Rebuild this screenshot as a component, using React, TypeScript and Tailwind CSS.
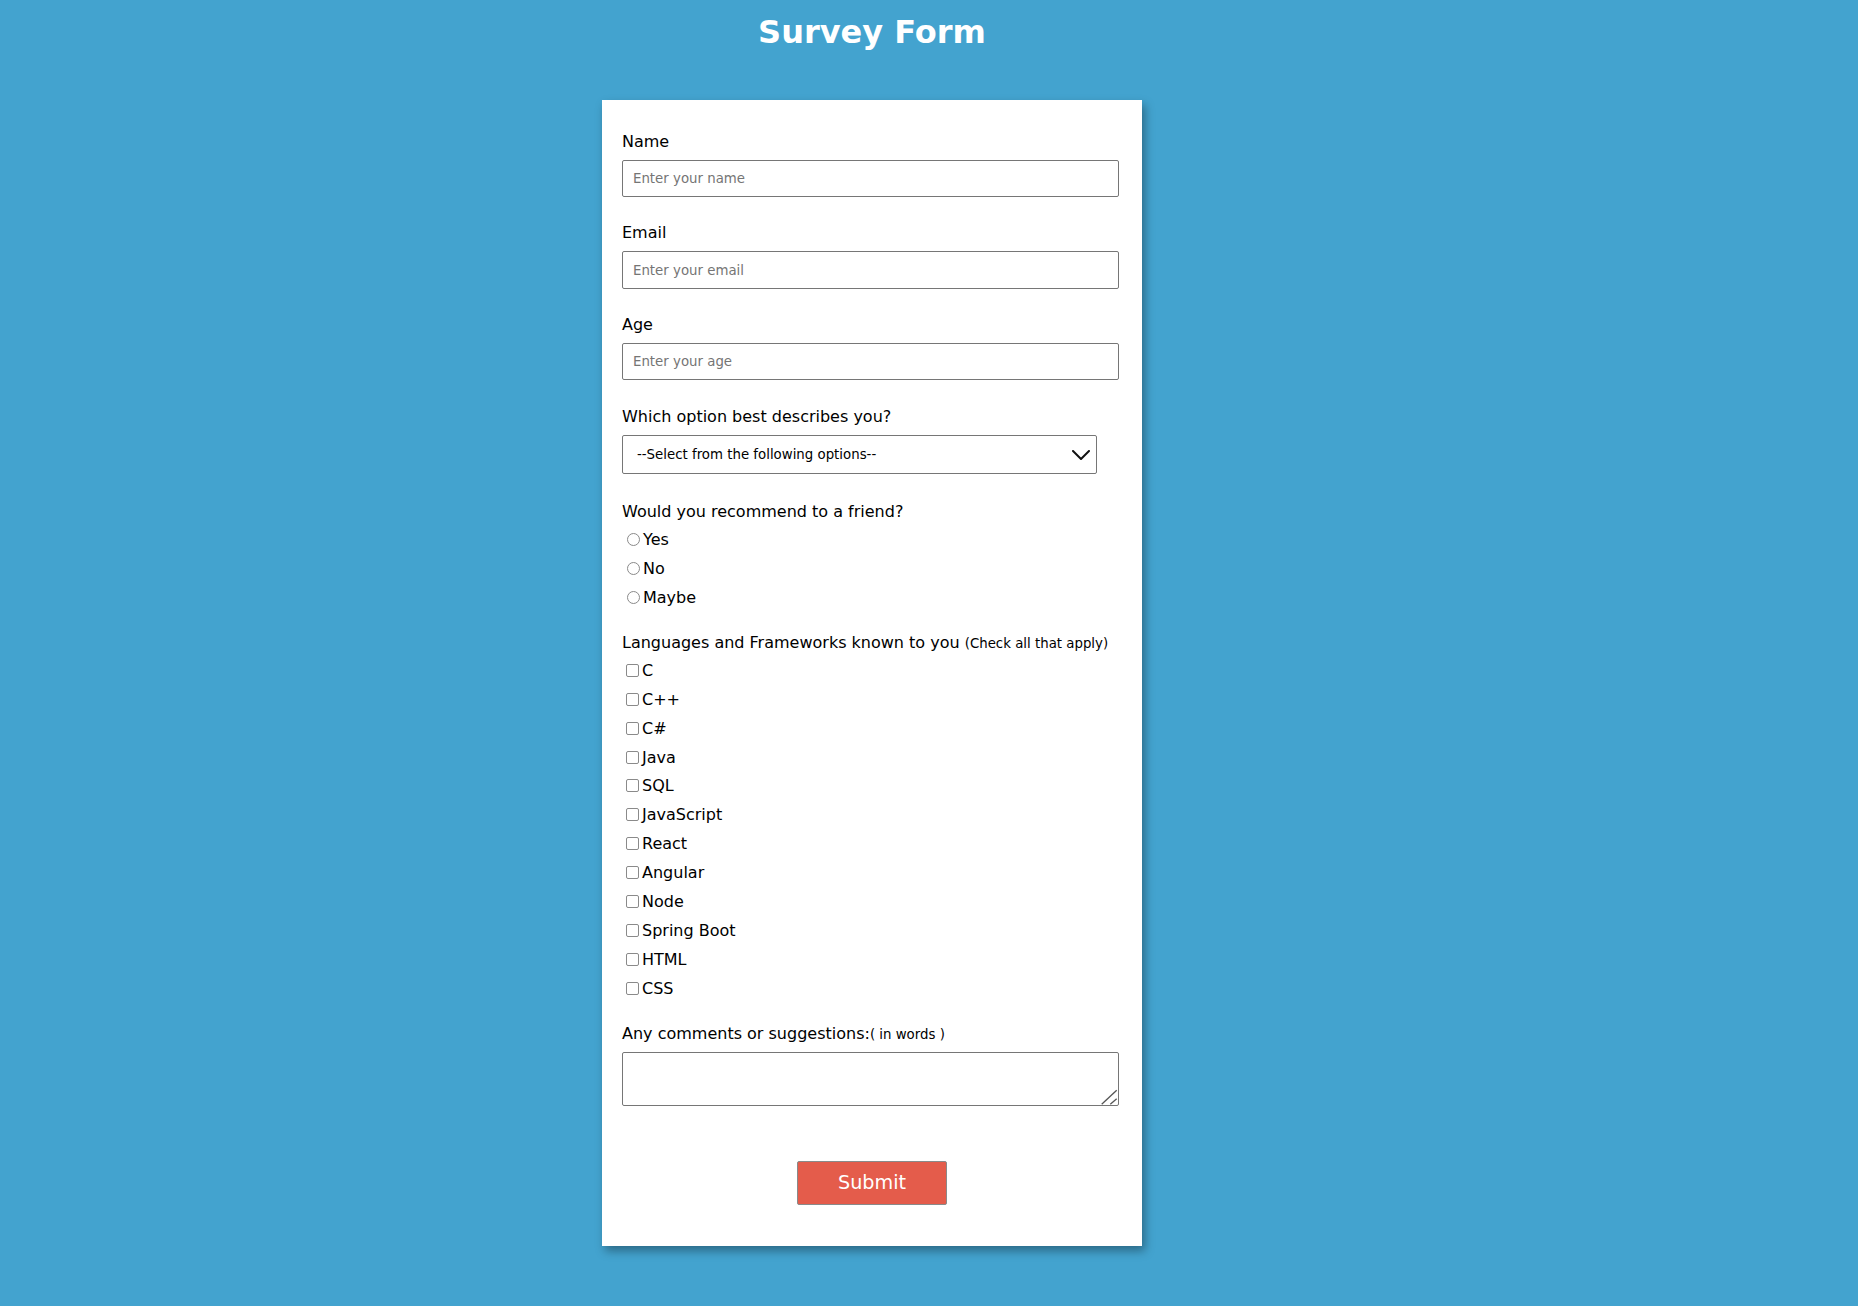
import React from "react";

const langs = [
  "C",
  "C++",
  "C#",
  "Java",
  "SQL",
  "JavaScript",
  "React",
  "Angular",
  "Node",
  "Spring Boot",
  "HTML",
  "CSS",
];

function TextField({
  label,
  placeholder,
  first,
}: {
  label: string;
  placeholder: string;
  first?: boolean;
}) {
  return (
    <div className={first ? "flex flex-col" : "flex flex-col mt-[26.17px]"}>
      <label className="h-[19px] text-[16px] leading-[19px] text-black">{label}</label>
      <input
        type="text"
        placeholder={placeholder}
        className="mt-[9px] h-[37.5px] w-[497px] border border-[#767676] rounded-[2px] px-[10px] text-[13.33px] text-black bg-white outline-none placeholder:text-[#757575]"
      />
    </div>
  );
}

export default function App() {
  return (
    <div className="min-h-screen w-full bg-[#43a3cf] flex flex-col items-center pr-[114px] font-['DejaVu_Sans','Verdana',sans-serif]">
      <h1 className="pt-[14px] text-[32px] leading-[37px] font-bold text-white">
        Survey Form
      </h1>
      <form className="mt-[49px] w-[540px] bg-white pt-[31.65px] pb-[40.3px] px-[20px] flex flex-col shadow-[3px_5px_9px_rgba(0,0,0,0.35)]">
        <TextField label="Name" placeholder="Enter your name" first />
        <TextField label="Email" placeholder="Enter your email" />
        <TextField label="Age" placeholder="Enter your age" />

        <div className="flex flex-col mt-[26.17px]">
          <label className="h-[19px] text-[16px] leading-[19px] text-black">
            Which option best describes you?
          </label>
          <div className="mt-[9.65px] h-[39px] w-[475px] border border-[#767676] rounded-[2px] bg-white flex items-center justify-between pl-[14px] pr-[6px]">
            <span className="text-[13.33px] text-black">
              --Select from the following options--
            </span>
            <svg width="18" height="10" viewBox="0 0 18 10" fill="none">
              <path
                d="M1 1L9 9L17 1"
                stroke="#111"
                strokeWidth="2"
                strokeLinecap="round"
                strokeLinejoin="round"
              />
            </svg>
          </div>
        </div>

        <div className="flex flex-col mt-[27.35px]">
          <div className="h-[19px] text-[16px] leading-[19px] text-black">
            Would you recommend to a friend?
          </div>
          <div className="mt-[9.3px] flex flex-col gap-[10px]">
            {["Yes", "No", "Maybe"].map((o) => (
              <label
                key={o}
                className="flex items-center h-[19px] text-[16px] leading-[19px] text-black"
              >
                <input
                  type="radio"
                  name="recommend"
                  className="appearance-none ml-[5px] mr-[3px] w-[13px] h-[13px] rounded-full border border-[#8a8a8a] bg-white"
                />
                {o}
              </label>
            ))}
          </div>
        </div>

        <div className="flex flex-col mt-[25.7px]">
          <div className="h-[19px] text-[16px] leading-[19px] text-black whitespace-nowrap">
            Languages and Frameworks known to you{" "}
            <span className="text-[13.33px] leading-[15px]">(Check all that apply)</span>
          </div>
          <div className="mt-[9.3px] flex flex-col gap-[9.9px]">
            {langs.map((l) => (
              <label
                key={l}
                className="flex items-center h-[19px] text-[16px] leading-[19px] text-black"
              >
                <input
                  type="checkbox"
                  className="appearance-none ml-[4px] mr-[3px] w-[13px] h-[13px] rounded-[2px] border border-[#8a8a8a] bg-white"
                />
                {l}
              </label>
            ))}
          </div>
        </div>

        <div className="flex flex-col mt-[26.1px]">
          <label className="h-[19px] text-[16px] leading-[19px] text-black whitespace-nowrap">
            Any comments or suggestions:
            <span className="text-[13.33px] leading-[15px]">( in words )</span>
          </label>
          <div className="relative mt-[9.35px] h-[53.4px] w-[497px]">
            <textarea className="block h-full w-full resize-none border border-[#767676] rounded-[2px] bg-white outline-none text-[13.33px] p-[2px]" />
            <svg
              className="absolute right-[1px] bottom-[1px] pointer-events-none"
              width="17"
              height="16"
              viewBox="0 0 17 16"
              fill="none"
            >
              <path d="M0.7 15.3L15.7 1.3" stroke="#555" strokeWidth="1.3" />
              <path d="M9.3 15.3L15.7 9.7" stroke="#555" strokeWidth="1.3" />
            </svg>
          </div>
        </div>

        <button
          type="button"
          className="mt-[55.6px] self-center w-[149.5px] h-[44.4px] bg-[#e45c4b] border border-[#8a8a8a] rounded-[2px] text-white text-[19.2px] leading-[22px]"
        >
          Submit
        </button>
      </form>
    </div>
  );
}
